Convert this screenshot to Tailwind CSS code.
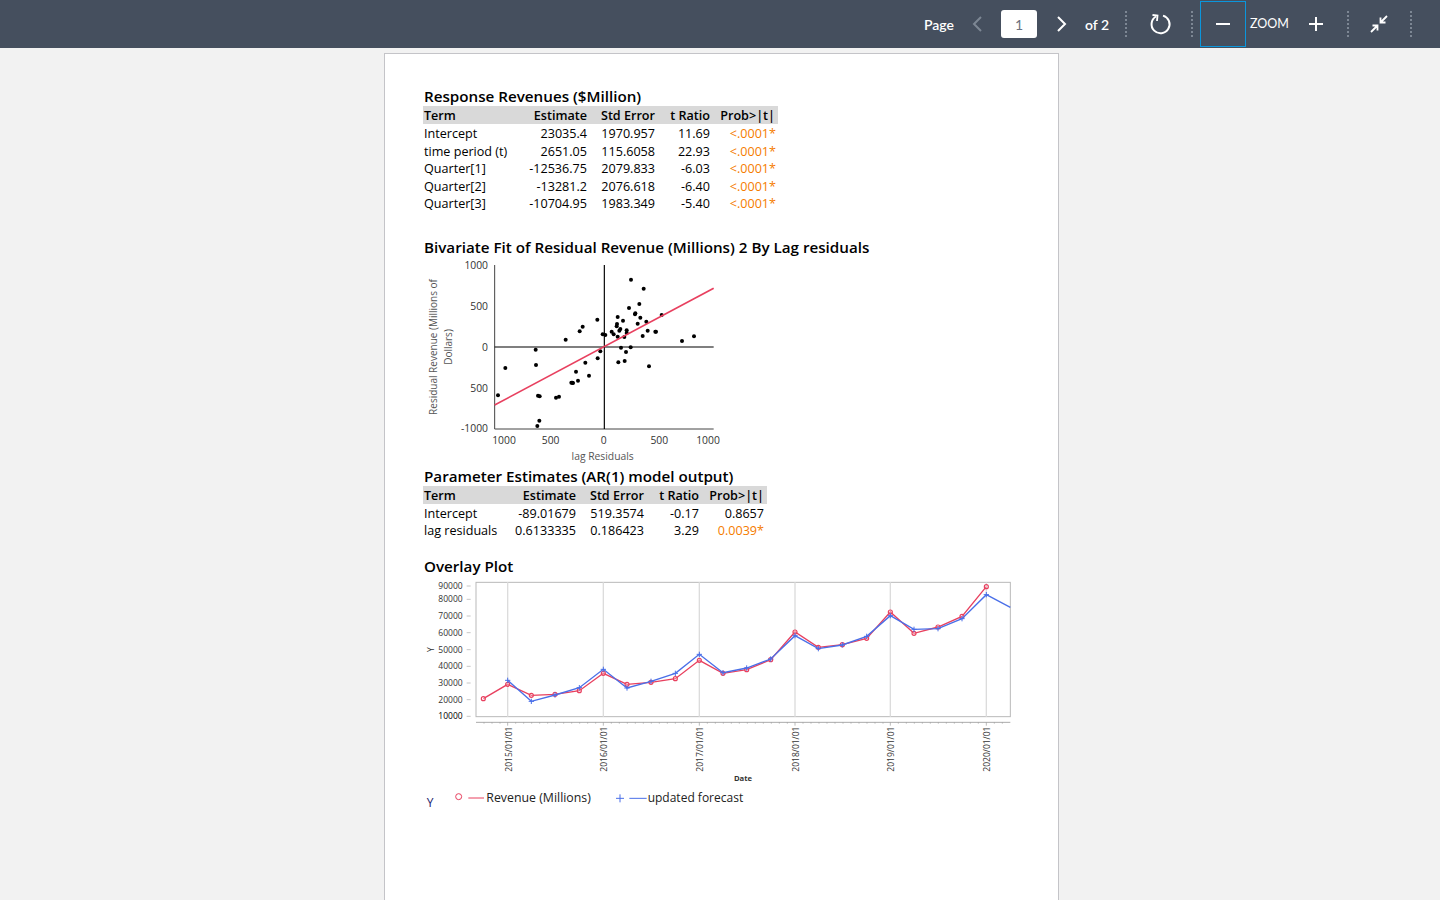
<!DOCTYPE html>
<html lang="en">
<head>
    <meta charset="UTF-8">
    <meta name="viewport" content="width=device-width, initial-scale=1.0">
    <title>report viewer</title>
    <script src="https://cdn.jsdelivr.net/npm/@tailwindcss/browser@4"></script>
</head>
<body class="bg-[#f2f2f2] h-[900px] overflow-hidden font-['Open_Sans',sans-serif]">
    <!-- toolbar -->
    <div class="h-12 bg-[#454f5e] flex items-center justify-end pr-[28px] text-white text-[14px] font-['Lato',sans-serif]">
        <span class="w-[30px] font-semibold whitespace-nowrap">Page</span>
        <svg class="w-[18px] h-[24px] ml-[14px]" viewBox="0 0 18 24" fill="none" stroke="#7d8794" stroke-width="2"><path d="M13 5 L6 12 L13 19"/></svg>
        <div class="w-[36px] h-[28px] ml-[15px] bg-white rounded-[3px] flex items-center justify-center text-[#6b7280]">1</div>
        <svg class="w-[18px] h-[24px] ml-[15px]" viewBox="0 0 18 24" fill="none" stroke="#ffffff" stroke-width="2"><path d="M6 5 L13 12 L6 19"/></svg>
        <span class="w-[25px] ml-[15px] font-semibold whitespace-nowrap">of 2</span>
        <div class="w-[2px] h-[26px] ml-[15px] border-l-2 border-dotted border-[#7d8794]"></div>
        <svg class="w-[24px] h-[24px] ml-[22px]" viewBox="0 0 24 24" fill="none" stroke="#ffffff" stroke-width="2"><path d="M7 4.5 A9 9 0 1 0 14 3.6"/><path d="M3.5 3 L8.5 3.5 L8 9" stroke-width="1.8"/></svg>
        <div class="w-[2px] h-[26px] ml-[18px] border-l-2 border-dotted border-[#7d8794]"></div>
        <div class="w-[46px] h-[46px] ml-[7px] border border-[#0b96dc] flex items-center justify-center">
            <div class="w-[14px] h-[2px] bg-white"></div>
        </div>
        <span class="w-[39px] ml-[4px] pt-px text-[12.5px] whitespace-nowrap">ZOOM</span>
        <svg class="w-[20px] h-[20px] ml-[17px]" viewBox="0 0 20 20" fill="none" stroke="#ffffff" stroke-width="2"><path d="M3 10 H17 M10 3 V17"/></svg>
        <div class="w-[2px] h-[26px] ml-[21px] border-l-2 border-dotted border-[#7d8794]"></div>
        <svg class="w-[20px] h-[20px] ml-[20px]" viewBox="0 0 20 20" fill="none" stroke="#ffffff" stroke-width="1.8"><path d="M2 18 L8 12 M3.5 11.5 H8.5 V16.5"/><path d="M18 2 L12 8 M11.5 3.5 V8.5 H16.5"/></svg>
        <div class="w-[2px] h-[26px] ml-[21px] border-l-2 border-dotted border-[#7d8794]"></div>
    </div>

    <!-- report page -->
    <div class="w-[675px] h-[860px] ml-[384px] mt-[5px] bg-white border border-[#c4c4c8] pl-[38px] pt-[33px] text-black">
        <h2 class="h-[19px] pl-px text-[15.2px] leading-[19px] font-semibold whitespace-nowrap">Response Revenues ($Million)</h2>
        <table class="table-fixed border-separate border-spacing-0 w-[355px] text-[12.6px] leading-[15.5px] [&_td]:pt-[2px] [&_th]:pt-[2px]">
            <colgroup><col class="w-[101px]"><col class="w-[66px]"><col class="w-[68px]"><col class="w-[55px]"><col class="w-[65px]"></colgroup>
            <thead>
                <tr class="h-[18px] bg-[#d9d9d9]">
                    <th class="text-left px-px font-semibold">Term</th>
                    <th class="text-right pr-[3px] font-semibold">Estimate</th>
                    <th class="text-right pr-[3px] font-semibold">Std Error</th>
                    <th class="text-right pr-[3px] font-semibold">t Ratio</th>
                    <th class="text-right pr-[3px] font-semibold">Prob&gt;|t|</th>
                </tr>
            </thead>
            <tbody>
                <tr class="h-[17.5px]"><td class="px-px whitespace-nowrap">Intercept</td><td class="text-right pr-[3px]">23035.4</td><td class="text-right pr-[3px]">1970.957</td><td class="text-right pr-[3px]">11.69</td><td class="text-right pr-[2px] text-[#f57c00]">&lt;.0001*</td></tr>
                <tr class="h-[17.5px]"><td class="px-px whitespace-nowrap">time period (t)</td><td class="text-right pr-[3px]">2651.05</td><td class="text-right pr-[3px]">115.6058</td><td class="text-right pr-[3px]">22.93</td><td class="text-right pr-[2px] text-[#f57c00]">&lt;.0001*</td></tr>
                <tr class="h-[17.5px]"><td class="px-px whitespace-nowrap">Quarter[1]</td><td class="text-right pr-[3px]">-12536.75</td><td class="text-right pr-[3px]">2079.833</td><td class="text-right pr-[3px]">-6.03</td><td class="text-right pr-[2px] text-[#f57c00]">&lt;.0001*</td></tr>
                <tr class="h-[17.5px]"><td class="px-px whitespace-nowrap">Quarter[2]</td><td class="text-right pr-[3px]">-13281.2</td><td class="text-right pr-[3px]">2076.618</td><td class="text-right pr-[3px]">-6.40</td><td class="text-right pr-[2px] text-[#f57c00]">&lt;.0001*</td></tr>
                <tr class="h-[17.5px]"><td class="px-px whitespace-nowrap">Quarter[3]</td><td class="text-right pr-[3px]">-10704.95</td><td class="text-right pr-[3px]">1983.349</td><td class="text-right pr-[3px]">-5.40</td><td class="text-right pr-[2px] text-[#f57c00]">&lt;.0001*</td></tr>
            </tbody>
        </table>

        <h2 class="h-[19px] mt-[26px] pl-px text-[15.2px] leading-[19px] font-semibold whitespace-nowrap">Bivariate Fit of Residual Revenue (Millions) 2 By Lag residuals</h2>
        <svg class="block w-[310px] h-[210px] -ml-[3px] mt-[-2px]" viewBox="0 0 930 630" font-family="Open Sans, sans-serif" font-size="31" fill="#333">
            <path d="M224 30 V522 H881" fill="none" stroke="#444" stroke-width="3"/>
            <path d="M553 30 V522 M224 276 H881" fill="none" stroke="#000" stroke-width="3.5"/>
            <g text-anchor="end">
                <text x="204" y="41">1000</text><text x="204" y="164">500</text><text x="204" y="287">0</text><text x="204" y="410">500</text><text x="204" y="532">-1000</text>
            </g>
            <g text-anchor="middle">
                <text x="252" y="568">1000</text><text x="392" y="568">500</text><text x="551" y="568">0</text><text x="718" y="568">500</text><text x="864" y="568">1000</text>
                <text x="548" y="614" fill="#555">lag Residuals</text>
            </g>
            <g text-anchor="middle" fill="#555" font-size="30">
                <text transform="translate(50 276) rotate(-90)">Residual Revenue (Millions of</text>
                <text transform="translate(96 276) rotate(-90)">Dollars)</text>
            </g>
            <g fill="#000">
                <circle cx="633" cy="74" r="6"/><circle cx="671" cy="101" r="6"/><circle cx="658" cy="147" r="6"/><circle cx="627" cy="159" r="6"/><circle cx="725" cy="180" r="6"/><circle cx="532" cy="194" r="6"/><circle cx="593" cy="186" r="6"/><circle cx="609" cy="197" r="6"/><circle cx="646" cy="175" r="6"/><circle cx="645" cy="178" r="6"/><circle cx="661" cy="188" r="6"/><circle cx="653" cy="206" r="6"/><circle cx="679" cy="200" r="6"/><circle cx="683" cy="227" r="6"/><circle cx="706" cy="230" r="6"/><circle cx="708" cy="230" r="6"/><circle cx="668" cy="243" r="6"/><circle cx="591" cy="207" r="6"/><circle cx="590" cy="214" r="6"/><circle cx="601" cy="222" r="6"/><circle cx="598" cy="227" r="6"/><circle cx="620" cy="226" r="6"/><circle cx="620" cy="234" r="6"/><circle cx="575" cy="230" r="6"/><circle cx="581" cy="238" r="6"/><circle cx="548" cy="238" r="6"/><circle cx="556" cy="240" r="6"/><circle cx="593" cy="245" r="6"/><circle cx="613" cy="246" r="6"/><circle cx="488" cy="215" r="6"/><circle cx="479" cy="229" r="6"/><circle cx="437" cy="254" r="6"/><circle cx="822" cy="244" r="6"/><circle cx="786" cy="258" r="6"/><circle cx="347" cy="284" r="6"/><circle cx="348" cy="330" r="6"/><circle cx="256" cy="339" r="6"/><circle cx="234" cy="421" r="6"/><circle cx="354" cy="422" r="6"/><circle cx="359" cy="424" r="6"/><circle cx="408" cy="428" r="6"/><circle cx="417" cy="425" r="6"/><circle cx="358" cy="497" r="6"/><circle cx="352" cy="513" r="6"/><circle cx="457" cy="383" r="6"/><circle cx="454" cy="383" r="6"/><circle cx="459" cy="384" r="6"/><circle cx="474" cy="377" r="6"/><circle cx="468" cy="350" r="6"/><circle cx="507" cy="362" r="6"/><circle cx="496" cy="323" r="6"/><circle cx="533" cy="310" r="6"/><circle cx="541" cy="289" r="6"/><circle cx="603" cy="278" r="6"/><circle cx="632" cy="277" r="6"/><circle cx="618" cy="291" r="6"/><circle cx="595" cy="322" r="6"/><circle cx="614" cy="318" r="6"/><circle cx="687" cy="334" r="6"/>
            </g>
            <path d="M224 450 L881 100" stroke="#e8405f" stroke-width="5" fill="none"/>
        </svg>

        <h2 class="h-[19px] mt-[2px] pl-px text-[15.2px] leading-[19px] font-semibold whitespace-nowrap">Parameter Estimates (AR(1) model output)</h2>
        <table class="table-fixed border-separate border-spacing-0 w-[344px] text-[12.6px] leading-[15.5px] [&_td]:pt-[2px] [&_th]:pt-[2px]">
            <colgroup><col class="w-[90px]"><col class="w-[66px]"><col class="w-[68px]"><col class="w-[55px]"><col class="w-[65px]"></colgroup>
            <thead>
                <tr class="h-[18px] bg-[#d9d9d9]">
                    <th class="text-left px-px font-semibold">Term</th>
                    <th class="text-right pr-[3px] font-semibold">Estimate</th>
                    <th class="text-right pr-[3px] font-semibold">Std Error</th>
                    <th class="text-right pr-[3px] font-semibold">t Ratio</th>
                    <th class="text-right pr-[3px] font-semibold">Prob&gt;|t|</th>
                </tr>
            </thead>
            <tbody>
                <tr class="h-[17.5px]"><td class="px-px whitespace-nowrap">Intercept</td><td class="text-right pr-[3px]">-89.01679</td><td class="text-right pr-[3px]">519.3574</td><td class="text-right pr-[3px]">-0.17</td><td class="text-right pr-[3px]">0.8657</td></tr>
                <tr class="h-[17.5px]"><td class="px-px whitespace-nowrap">lag residuals</td><td class="text-right pr-[3px]">0.6133335</td><td class="text-right pr-[3px]">0.186423</td><td class="text-right pr-[3px]">3.29</td><td class="text-right pr-[3px] text-[#f57c00]">0.0039*</td></tr>
            </tbody>
        </table>

        <h2 class="h-[19px] mt-[18px] pl-px text-[15.2px] leading-[19px] font-semibold whitespace-nowrap">Overlay Plot</h2>
        <svg class="block w-[595px] h-[240px] -ml-[3px] mt-[-1px]" viewBox="0 0 1785 720" font-family="Open Sans, sans-serif" font-size="25.5" fill="#333">
            <rect x="168" y="22" width="1603" height="403" fill="none" stroke="#b9b9b9" stroke-width="3"/>
            <path d="M263 22 V425 M550 22 V425 M838 22 V425 M1125 22 V425 M1411 22 V425 M1699 22 V425" stroke="#dcdcdc" stroke-width="4" fill="none"/>
            <path d="M140 33 H152 M140 73 H152 M140 123 H152 M140 173 H152 M140 224 H152 M140 274 H152 M140 324 H152 M140 374 H152 M140 424 H152" stroke="#aaa" stroke-width="2" fill="none"/>
            <g text-anchor="end">
                <text x="128" y="42">90000</text><text x="128" y="82">80000</text><text x="128" y="132">70000</text><text x="128" y="182">60000</text><text x="128" y="233">50000</text><text x="128" y="283">40000</text><text x="128" y="333">30000</text><text x="128" y="383">20000</text><text x="128" y="433" fill="#000">10000</text>
            </g>
            <text transform="translate(43 224) rotate(-90)" text-anchor="middle">Y</text>
            <path d="M168 442 H1771" stroke="#aaa" stroke-width="3" fill="none"/>
            <path d="M192 442 v4 M216 442 v4 M240 442 v4 M263 442 v10 M287 442 v4 M311 442 v4 M335 442 v4 M359 442 v4 M383 442 v4 M407 442 v4 M431 442 v4 M455 442 v4 M479 442 v4 M503 442 v4 M527 442 v4 M550 442 v10 M574 442 v4 M598 442 v4 M622 442 v4 M646 442 v4 M670 442 v4 M694 442 v4 M718 442 v4 M742 442 v4 M766 442 v4 M790 442 v4 M814 442 v4 M838 442 v10 M862 442 v4 M886 442 v4 M910 442 v4 M934 442 v4 M958 442 v4 M982 442 v4 M1006 442 v4 M1030 442 v4 M1054 442 v4 M1078 442 v4 M1102 442 v4 M1125 442 v10 M1149 442 v4 M1173 442 v4 M1197 442 v4 M1221 442 v4 M1245 442 v4 M1269 442 v4 M1293 442 v4 M1317 442 v4 M1341 442 v4 M1365 442 v4 M1389 442 v4 M1411 442 v10 M1435 442 v4 M1459 442 v4 M1483 442 v4 M1507 442 v4 M1531 442 v4 M1555 442 v4 M1579 442 v4 M1603 442 v4 M1627 442 v4 M1651 442 v4 M1675 442 v4 M1699 442 v10 M1723 442 v4 M1747 442 v4" stroke="#999" stroke-width="2" fill="none"/>
            <g text-anchor="start">
                <text transform="translate(275 590) rotate(-90)">2015/01/01</text>
                <text transform="translate(562 590) rotate(-90)">2016/01/01</text>
                <text transform="translate(850 590) rotate(-90)">2017/01/01</text>
                <text transform="translate(1137 590) rotate(-90)">2018/01/01</text>
                <text transform="translate(1423 590) rotate(-90)">2019/01/01</text>
                <text transform="translate(1711 590) rotate(-90)">2020/01/01</text>
            </g>
            <text x="969" y="618" text-anchor="middle" font-weight="700" font-size="23">Date</text>
            <polyline points="190,371 263,328 334,361 405,358 478,347 550,295 621,328 693,322 766,311 838,256 909,295 980,284 1052,254 1125,171 1195,217 1267,209 1340,190 1411,111 1482,175 1554,156 1626,124 1699,35" fill="none" stroke="#e8405f" stroke-width="4"/>
            <g fill="#fff" fill-opacity="0.3" stroke="#e8405f" stroke-width="3.5">
                <circle cx="190" cy="371" r="6"/><circle cx="263" cy="328" r="6"/><circle cx="334" cy="361" r="6"/><circle cx="405" cy="358" r="6"/><circle cx="478" cy="347" r="6"/><circle cx="550" cy="295" r="6"/><circle cx="621" cy="328" r="6"/><circle cx="693" cy="322" r="6"/><circle cx="766" cy="311" r="6"/><circle cx="838" cy="256" r="6"/><circle cx="909" cy="295" r="6"/><circle cx="980" cy="284" r="6"/><circle cx="1052" cy="254" r="6"/><circle cx="1125" cy="171" r="6"/><circle cx="1195" cy="217" r="6"/><circle cx="1267" cy="209" r="6"/><circle cx="1340" cy="190" r="6"/><circle cx="1411" cy="111" r="6"/><circle cx="1482" cy="175" r="6"/><circle cx="1554" cy="156" r="6"/><circle cx="1626" cy="124" r="6"/><circle cx="1699" cy="35" r="6"/>
            </g>
            <polyline points="263,316 334,379 405,360 478,338 550,283 621,339 693,319 766,295 838,238 909,293 980,279 1052,252 1125,182 1195,221 1267,210 1340,184 1411,122 1482,163 1554,161 1626,131 1699,59 1771,97" fill="none" stroke="#4a6fe8" stroke-width="4"/>
            <path d="M255 316 h16 M263 308 v16 M326 379 h16 M334 371 v16 M397 360 h16 M405 352 v16 M470 338 h16 M478 330 v16 M542 283 h16 M550 275 v16 M613 339 h16 M621 331 v16 M685 319 h16 M693 311 v16 M758 295 h16 M766 287 v16 M830 238 h16 M838 230 v16 M901 293 h16 M909 285 v16 M972 279 h16 M980 271 v16 M1044 252 h16 M1052 244 v16 M1117 182 h16 M1125 174 v16 M1187 221 h16 M1195 213 v16 M1259 210 h16 M1267 202 v16 M1332 184 h16 M1340 176 v16 M1403 122 h16 M1411 114 v16 M1474 163 h16 M1482 155 v16 M1546 161 h16 M1554 153 v16 M1618 131 h16 M1626 123 v16 M1691 59 h16 M1699 51 v16" stroke="#4a6fe8" stroke-width="3" fill="none"/>
            <text x="20" y="697" font-size="36" fill="#1a1a6a">Y</text>
            <circle cx="116" cy="665" r="9" fill="none" stroke="#e8405f" stroke-width="3"/>
            <path d="M145 669 H192" stroke="#e8405f" stroke-width="3"/>
            <text x="199" y="682" font-size="37" fill="#222">Revenue (Millions)</text>
            <path d="M588 670 H612 M600 658 V682" stroke="#4a6fe8" stroke-width="3"/>
            <path d="M628 670 H680" stroke="#4a6fe8" stroke-width="3"/>
            <text x="683" y="682" font-size="36" fill="#222">updated forecast</text>
        </svg>
    </div>
</body>
</html>
